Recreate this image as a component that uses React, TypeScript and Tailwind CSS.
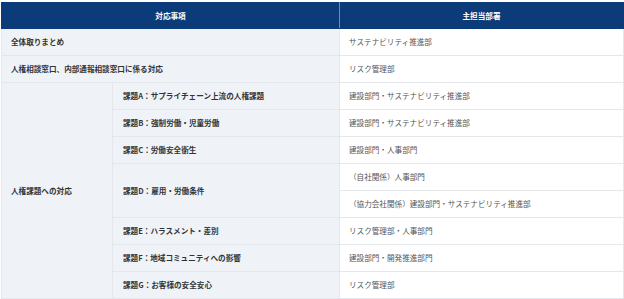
const font = { fontFamily: '"Noto Sans CJK JP", "Noto Sans", sans-serif' };

type Row = { sub: string; depts: string[] };

const issues: Row[] = [
  { sub: "課題A：サプライチェーン上流の人権課題", depts: ["建設部門・サステナビリティ推進部"] },
  { sub: "課題B：強制労働・児童労働", depts: ["建設部門・サステナビリティ推進部"] },
  { sub: "課題C：労働安全衛生", depts: ["建設部門・人事部門"] },
  {
    sub: "課題D：雇用・労働条件",
    depts: ["（自社関係）人事部門", "（協力会社関係）建設部門・サステナビリティ推進部"],
  },
  { sub: "課題E：ハラスメント・差別", depts: ["リスク管理部・人事部門"] },
  { sub: "課題F：地域コミュニティへの影響", depts: ["建設部門・開発推進部門"] },
  { sub: "課題G：お客様の安全安心", depts: ["リスク管理部"] },
];

const cellL = "border border-[#e4e7eb] bg-[#eff3f8] pl-[9px] font-bold text-[#333]";
const cellR = "border border-[#e4e7eb] bg-white pl-[9px] text-[#555]";

export default function App() {
  const rows: React.ReactNode[] = [];
  let first = true;
  issues.forEach((issue, i) => {
    issue.depts.forEach((d, j) => {
      rows.push(
        <tr key={`${i}-${j}`} className="h-[27px]">
          {first && (
            <td rowSpan={8} className={cellL}>
              人権課題への対応
            </td>
          )}
          {j === 0 && (
            <td rowSpan={issue.depts.length} className={`${cellL} pl-[10px]`}>
              {issue.sub}
            </td>
          )}
          <td className={cellR}>{d}</td>
        </tr>
      );
      first = false;
    });
  });

  return (
    <div className="w-[624px] h-[299px] bg-white pt-[2px] pl-[1px]" style={font}>
      <table className="w-[622px] table-fixed border-collapse text-[7.6px] leading-none">
        <colgroup>
          <col className="w-[111px]" />
          <col className="w-[227px]" />
          <col className="w-[284px]" />
        </colgroup>
        <thead>
          <tr className="h-[26px] bg-[#0b3b78] text-white font-bold">
            <th colSpan={2} className="border border-[#0b3b78] border-r-[#6f8bb3] text-center">
              対応事項
            </th>
            <th className="border border-[#0b3b78] text-center">主担当部署</th>
          </tr>
        </thead>
        <tbody>
          <tr className="h-[27px]">
            <td colSpan={2} className={cellL}>
              全体取りまとめ
            </td>
            <td className={cellR}>サステナビリティ推進部</td>
          </tr>
          <tr className="h-[27px]">
            <td colSpan={2} className={cellL}>
              人権相談窓口、内部通報相談窓口に係る対応
            </td>
            <td className={cellR}>リスク管理部</td>
          </tr>
          {rows}
        </tbody>
      </table>
    </div>
  );
}
